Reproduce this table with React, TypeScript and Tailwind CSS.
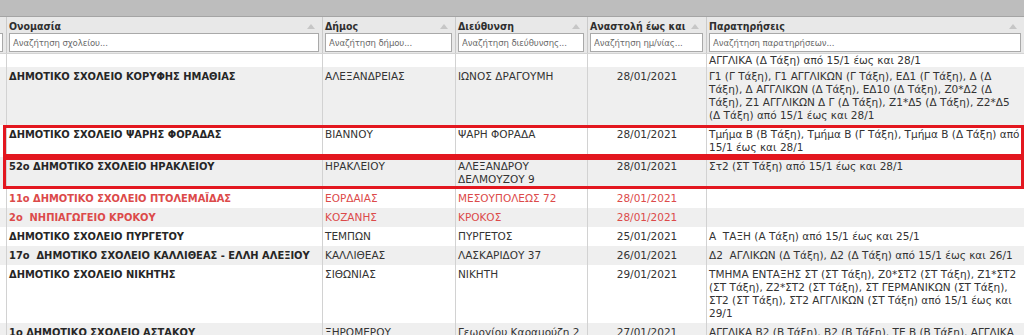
import React from 'react';

interface Row {
  name?: string;
  dimos?: string;
  address?: string[];
  date?: string;
  notes: string[];
  closed?: boolean;
  marked?: boolean;
}

const ROWS: Row[] = [
  {
    name: 'ΔΗΜΟΤΙΚΟ ΣΧΟΛΕΙΟ ΚΟΡΥΦΗΣ ΗΜΑΘΙΑΣ',
    dimos: 'ΑΛΕΞΑΝΔΡΕΙΑΣ',
    address: ['ΙΩΝΟΣ ΔΡΑΓΟΥΜΗ'],
    date: '28/01/2021',
    notes: [
      'Γ1 (Γ Τάξη), Γ1 ΑΓΓΛΙΚΩΝ (Γ Τάξη), ΕΔ1 (Γ Τάξη), Δ (Δ',
      'Τάξη), Δ ΑΓΓΛΙΚΩΝ (Δ Τάξη), ΕΔ10 (Δ Τάξη), Ζ0*Δ2 (Δ',
      'Τάξη), Ζ1 ΑΓΓΛΙΚΩΝ Δ Γ (Δ Τάξη), Ζ1*Δ5 (Δ Τάξη), Ζ2*Δ5',
      '(Δ Τάξη) από 15/1 έως και 28/1',
    ],
  },
  {
    name: 'ΔΗΜΟΤΙΚΟ ΣΧΟΛΕΙΟ ΨΑΡΗΣ ΦΟΡΑΔΑΣ',
    dimos: 'ΒΙΑΝΝΟΥ',
    address: ['ΨΑΡΗ ΦΟΡΑΔΑ'],
    date: '28/01/2021',
    notes: ['Τμήμα Β (Β Τάξη), Τμήμα Β (Γ Τάξη), Τμήμα Β (Δ Τάξη) από', '15/1 έως και 28/1'],
    marked: true,
  },
  {
    name: '52ο ΔΗΜΟΤΙΚΟ ΣΧΟΛΕΙΟ ΗΡΑΚΛΕΙΟΥ',
    dimos: 'ΗΡΑΚΛΕΙΟΥ',
    address: ['ΑΛΕΞΑΝΔΡΟΥ', 'ΔΕΛΜΟΥΖΟΥ 9'],
    date: '28/01/2021',
    notes: ['Στ2 (ΣΤ Τάξη) από 15/1 έως και 28/1'],
    marked: true,
  },
  {
    name: '11ο ΔΗΜΟΤΙΚΟ ΣΧΟΛΕΙΟ ΠΤΟΛΕΜΑΪΔΑΣ',
    dimos: 'ΕΟΡΔΑΙΑΣ',
    address: ['ΜΕΣΟΥΠΟΛΕΩΣ 72'],
    date: '28/01/2021',
    notes: [],
    closed: true,
  },
  {
    name: '2ο  ΝΗΠΙΑΓΩΓΕΙΟ ΚΡΟΚΟΥ',
    dimos: 'ΚΟΖΑΝΗΣ',
    address: ['ΚΡΟΚΟΣ'],
    date: '28/01/2021',
    notes: [],
    closed: true,
  },
  {
    name: 'ΔΗΜΟΤΙΚΟ ΣΧΟΛΕΙΟ ΠΥΡΓΕΤΟΥ',
    dimos: 'ΤΕΜΠΩΝ',
    address: ['ΠΥΡΓΕΤΟΣ'],
    date: '25/01/2021',
    notes: ['Α  ΤΑΞΗ (Α Τάξη) από 15/1 έως και 25/1'],
  },
  {
    name: '17ο  ΔΗΜΟΤΙΚΟ ΣΧΟΛΕΙΟ ΚΑΛΛΙΘΕΑΣ - ΕΛΛΗ ΑΛΕΞΙΟΥ',
    dimos: 'ΚΑΛΛΙΘΕΑΣ',
    address: ['ΛΑΣΚΑΡΙΔΟΥ 37'],
    date: '26/01/2021',
    notes: ['Δ2  ΑΓΛΙΚΩΝ (Δ Τάξη), Δ2 (Δ Τάξη) από 15/1 έως και 26/1'],
  },
  {
    name: 'ΔΗΜΟΤΙΚΟ ΣΧΟΛΕΙΟ ΝΙΚΗΤΗΣ',
    dimos: 'ΣΙΘΩΝΙΑΣ',
    address: ['ΝΙΚΗΤΗ'],
    date: '29/01/2021',
    notes: [
      'ΤΜΗΜΑ ΕΝΤΑΞΗΣ ΣΤ (ΣΤ Τάξη), Ζ0*ΣΤ2 (ΣΤ Τάξη), Ζ1*ΣΤ2',
      '(ΣΤ Τάξη), Ζ2*ΣΤ2 (ΣΤ Τάξη), ΣΤ ΓΕΡΜΑΝΙΚΩΝ (ΣΤ Τάξη),',
      'ΣΤ2 (ΣΤ Τάξη), ΣΤ2 ΑΓΓΛΙΚΩΝ (ΣΤ Τάξη) από 15/1 έως και',
      '29/1',
    ],
  },
  {
    name: '1ο ΔΗΜΟΤΙΚΟ ΣΧΟΛΕΙΟ ΑΣΤΑΚΟΥ',
    dimos: 'ΞΗΡΟΜΕΡΟΥ',
    address: ['Γεωργίου Καραμούζη 2'],
    date: '27/01/2021',
    notes: ['ΑΓΓΛΙΚΑ Β2 (Β Τάξη), Β2 (Β Τάξη), ΤΕ Β (Β Τάξη), ΑΓΓΛΙΚΑ', '(Β Τάξη) από 15/1 έως και 27/1'],
  },
];

const COLUMNS = [
  { title: 'Ονομασία', placeholder: 'Αναζήτηση σχολείου...' },
  { title: 'Δήμος', placeholder: 'Αναζήτηση δήμου...' },
  { title: 'Διεύθυνση', placeholder: 'Αναζήτηση διεύθυνσης...' },
  { title: 'Αναστολή έως και', placeholder: 'Αναζήτηση ημ/νίας...' },
  { title: 'Παρατηρήσεις', placeholder: 'Αναζήτηση παρατηρήσεων...' },
];

const GRID = 'grid grid-cols-[7px_316px_133px_132px_119px_1fr]';
const CELL = 'border-r border-[#d2d2d2] px-[2px] py-[3px] leading-[13px]';
// condensed face for bold titles/names and the search boxes, regular face for cell text
const NARROW = 'font-["DejaVu_Sans_Condensed","DejaVu_Sans",sans-serif]';

function SortArrow() {
  return (
    <svg width="8" height="5" viewBox="0 0 8 5" className="shrink-0">
      <path d="M0 5 L4 0 L8 5 Z" fill="#c6c6c6" />
    </svg>
  );
}

export default function App() {
  return (
    <div className='h-[335px] w-[1024px] overflow-hidden bg-white font-["DejaVu_Sans",Verdana,sans-serif] text-[10.5px] text-[#333]'>
      <div className="h-[17px] border-b border-[#a4a4a4] bg-[#bdbdbd]" />

      <div className={`${GRID} border-b border-[#d4d4d4] bg-[#e8e8e8]`}>
        <div className="border-r border-[#cacaca] pt-[16px]">
          <div className="h-[19px] w-[3px] border border-l-0 border-[#a9a9a9] bg-white" />
        </div>
        {COLUMNS.map((c, i) => (
          <div
            key={c.title}
            className={`flex flex-col px-[2px] pt-[3px] pb-[1px] ${i < 4 ? 'border-r border-[#cacaca]' : ''}`}
          >
            <div
              className={`flex h-[13px] items-center justify-between pr-[5px] text-[10.5px] font-bold leading-[13px] text-[#2f2f2f] ${NARROW}`}
            >
              <span>{c.title}</span>
              <SortArrow />
            </div>
            <input
              readOnly
              placeholder={c.placeholder}
              className={`mr-[1px] h-[19px] border border-[#a9a9a9] bg-white px-[3px] text-[9.5px] tracking-[-0.1px] outline-none placeholder:text-[#6a6a6a] ${NARROW}`}
            />
          </div>
        ))}
      </div>

      <div className={GRID}>
        <div className="h-[13px] border-r border-[#d2d2d2]" />
        <div className="border-r border-[#d2d2d2]" />
        <div className="border-r border-[#d2d2d2]" />
        <div className="border-r border-[#d2d2d2]" />
        <div className="border-r border-[#d2d2d2]" />
        <div className="px-[2px] leading-[13px] whitespace-nowrap">ΑΓΓΛΙΚΑ (Δ Τάξη) από 15/1 έως και 28/1</div>
      </div>

      {ROWS.map((r, i) => (
        <div
          key={r.name}
          className={`${GRID} relative ${i % 2 === 0 ? 'bg-[#efefef]' : 'bg-white'} ${
            r.closed ? 'text-[#dc4a4a]' : 'text-[#333]'
          }`}
        >
          <div className="border-r border-[#d2d2d2]" />
          <div
            className={`${CELL} ${NARROW} overflow-hidden text-[11px] font-bold whitespace-pre ${
              r.closed ? '' : 'text-[#262626]'
            }`}
          >
            {r.name}
          </div>
          <div className={CELL}>{r.dimos}</div>
          <div className={CELL}>
            {r.address?.map((a) => (
              <div key={a} className="whitespace-nowrap">
                {a}
              </div>
            ))}
          </div>
          <div className={`${CELL} text-center`}>{r.date}</div>
          <div className="px-[2px] py-[3px] leading-[13px]">
            {r.notes.map((n) => (
              <div key={n} className="whitespace-pre">
                {n}
              </div>
            ))}
          </div>
          {r.marked && (
            <div className="pointer-events-none absolute top-0 right-0 bottom-0 left-[3px] border-[3px] border-[#e3171f]" />
          )}
        </div>
      ))}
    </div>
  );
}
